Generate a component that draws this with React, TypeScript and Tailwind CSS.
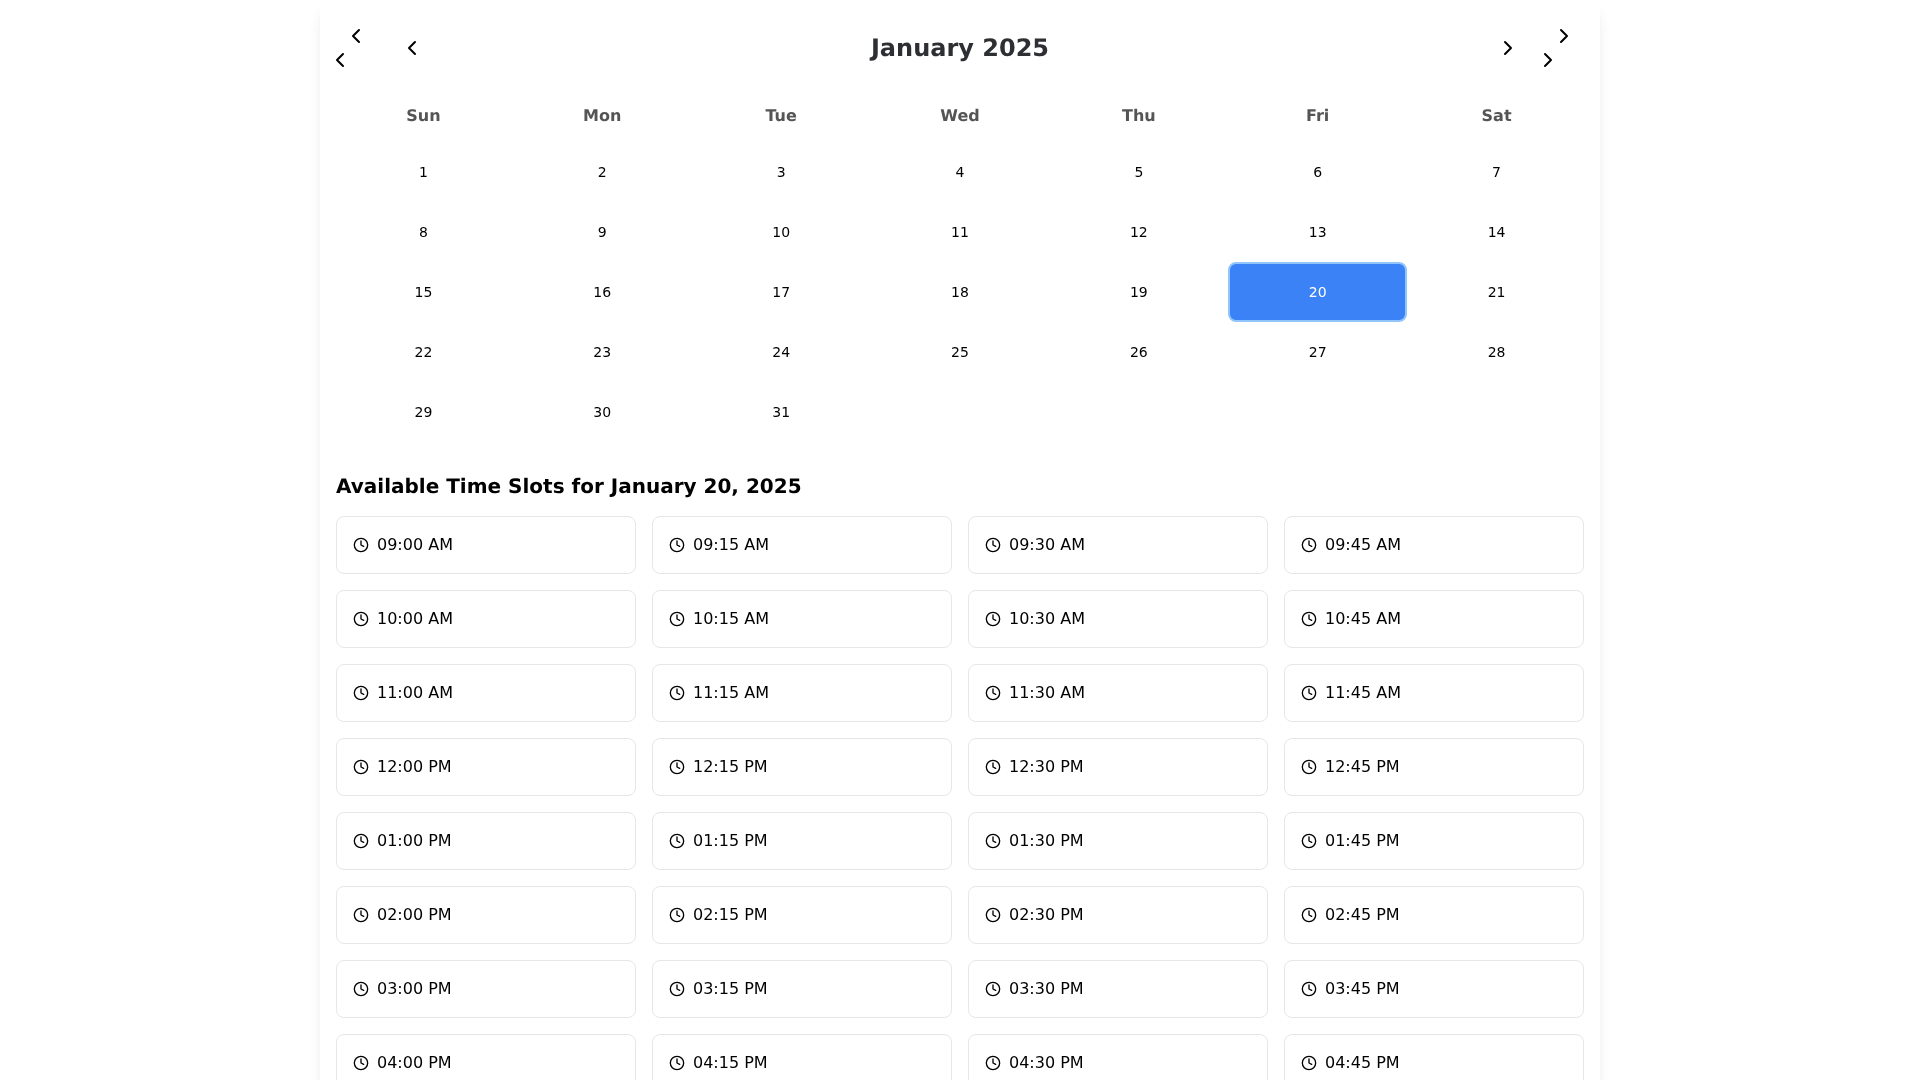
import React from 'react';
import { ChevronLeft, ChevronRight, Clock } from 'lucide-react';

const weekdays = ['Sun', 'Mon', 'Tue', 'Wed', 'Thu', 'Fri', 'Sat'];
const days = Array.from({ length: 31 }, (_, i) => i + 1);
const slots = [
  '09:00 AM', '09:15 AM', '09:30 AM', '09:45 AM',
  '10:00 AM', '10:15 AM', '10:30 AM', '10:45 AM',
  '11:00 AM', '11:15 AM', '11:30 AM', '11:45 AM',
  '12:00 PM', '12:15 PM', '12:30 PM', '12:45 PM',
  '01:00 PM', '01:15 PM', '01:30 PM', '01:45 PM',
  '02:00 PM', '02:15 PM', '02:30 PM', '02:45 PM',
  '03:00 PM', '03:15 PM', '03:30 PM', '03:45 PM',
  '04:00 PM', '04:15 PM', '04:30 PM', '04:45 PM',
];

export default function App() {
  return (
    <div className="min-h-screen bg-white font-['DejaVu_Sans',sans-serif] text-black [text-rendering:geometricPrecision]">
      <div className="max-w-7xl mx-auto p-4 bg-white rounded-lg shadow-lg will-change-transform">
        <div className="flex items-center justify-between mb-4">
          <div className="flex items-center gap-4">
            <button className="p-2 rounded-full">
              <ChevronLeft className="w-6 h-6" />
              <ChevronLeft className="w-6 h-6 -ml-4" />
            </button>
            <button className="p-2 rounded-full">
              <ChevronLeft className="w-6 h-6" />
            </button>
          </div>
          <h2 className="text-2xl font-bold text-[#2d2f33]">January 2025</h2>
          <div className="flex items-center gap-4">
            <button className="p-2 rounded-full">
              <ChevronRight className="w-6 h-6" />
            </button>
            <button className="p-2 rounded-full">
              <ChevronRight className="w-6 h-6" />
              <ChevronRight className="w-6 h-6 -ml-4" />
            </button>
          </div>
        </div>

        <div className="grid grid-cols-7 -mx-0.5 mb-[30px]">
          {weekdays.map((day) => (
            <div key={day} className="h-[46px] flex items-center justify-center pb-1.5 font-bold text-[#555555]">
              {day}
            </div>
          ))}
          {days.map((day) => (
            <button
              key={day}
              className={
                day === 20
                  ? 'h-[60px] text-sm rounded-lg bg-[#3b82f6] text-white border-2 border-[#93c5fd]'
                  : 'h-[60px] text-sm rounded-lg border-2 border-transparent'
              }
            >
              {day}
            </button>
          ))}
        </div>

        <h3 className="text-xl font-bold mb-4">Available Time Slots for January 20, 2025</h3>
        <div className="grid grid-cols-4 gap-4">
          {slots.map((slot) => (
            <button key={slot} className="flex items-center p-4 border border-[#e5e7eb] rounded-lg">
              <Clock className="w-4 h-4 mr-2" />
              {slot}
            </button>
          ))}
        </div>
      </div>
    </div>
  );
}
